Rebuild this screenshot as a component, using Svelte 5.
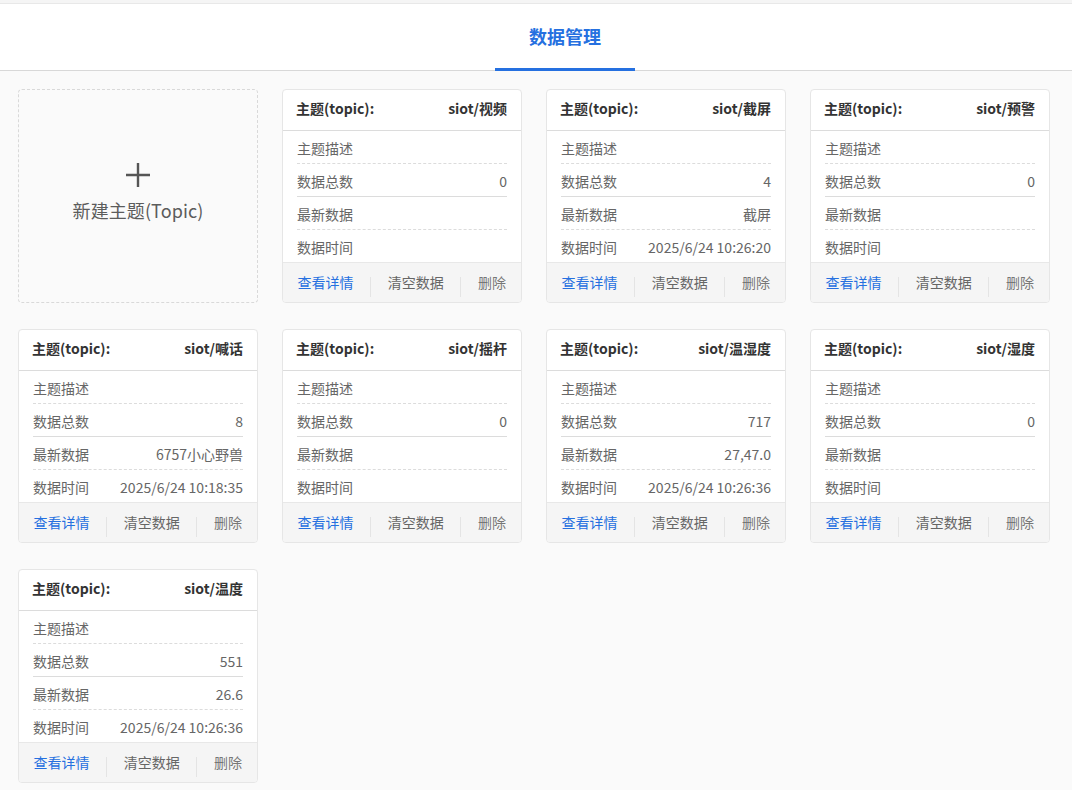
<script>
	const topics = [
		{ name: 'siot/视频', total: 0, latest: '', time: '' },
		{ name: 'siot/截屏', total: 4, latest: '截屏', time: '2025/6/24 10:26:20' },
		{ name: 'siot/预警', total: 0, latest: '', time: '' },
		{ name: 'siot/喊话', total: 8, latest: '6757小心野兽', time: '2025/6/24 10:18:35' },
		{ name: 'siot/摇杆', total: 0, latest: '', time: '' },
		{ name: 'siot/温湿度', total: 717, latest: '27,47.0', time: '2025/6/24 10:26:36' },
		{ name: 'siot/湿度', total: 0, latest: '', time: '' },
		{ name: 'siot/温度', total: 551, latest: '26.6', time: '2025/6/24 10:26:36' }
	];
</script>

<div class="page">
	<header class="tabs">
		<a class="tab">数据管理</a>
	</header>

	<main class="grid">
		<div class="card-new">
			<svg class="plus" width="26" height="26" viewBox="0 0 26 26">
				<path d="M13 1v24M1 13h24" stroke="#555" stroke-width="2.4" fill="none" />
			</svg>
			<span>新建主题(Topic)</span>
		</div>

		{#each topics as t}
			<div class="card">
				<div class="card-head">
					<span>主题(topic):</span>
					<span>{t.name}</span>
				</div>
				<div class="card-body">
					<div class="row dashed"><span>主题描述</span></div>
					<div class="row solid"><span>数据总数</span><span>{t.total}</span></div>
					<div class="row dashed"><span>最新数据</span><span>{t.latest}</span></div>
					<div class="row last"><span>数据时间</span><span>{t.time}</span></div>
				</div>
				<div class="card-foot">
					<a class="link primary">查看详情</a>
					<i></i>
					<a class="link">清空数据</a>
					<i></i>
					<a class="link muted">删除</a>
				</div>
			</div>
		{/each}
	</main>
</div>

<style>
	:global(body) {
		background: #fafafa;
	}

	.page {
		font-family: "Noto Sans CJK SC", "Noto Sans", sans-serif;
		font-size: 14px;
		color: #666;
		border-top: 3px solid #f5f5f5;
		box-sizing: border-box;
		height: 790px;
		overflow: hidden;
		background: #fafafa;
	}

	.tabs {
		display: flex;
		justify-content: center;
		height: 68px;
		box-sizing: border-box;
		padding-left: 58px;
		background: #fff;
		border-top: 1px solid #e8e8e8;
		border-bottom: 1px solid #d8d8d8;
	}

	.tab {
		width: 140px;
		height: 67px;
		box-sizing: border-box;
		text-align: center;
		line-height: 64px;
		font-size: 18px;
		font-weight: 700;
		color: #2570e0;
		border-bottom: 3px solid #2570e0;
	}

	.grid {
		display: grid;
		grid-template-columns: repeat(4, 240px);
		column-gap: 24px;
		row-gap: 26px;
		padding: 18px 0 0 18px;
	}

	.card-new {
		height: 214px;
		box-sizing: border-box;
		border: 1px dashed #d9d9d9;
		border-radius: 4px;
		display: flex;
		flex-direction: column;
		align-items: center;
		padding-top: 72px;
		font-size: 18px;
		letter-spacing: 0.1px;
		color: #5c5c5c;
	}

	.plus {
		margin-bottom: 9px;
	}

	.card {
		height: 214px;
		box-sizing: border-box;
		border: 1px solid #e6e6e6;
		border-radius: 4px;
		background: #fff;
		overflow: hidden;
		display: flex;
		flex-direction: column;
	}

	.card-head {
		height: 41px;
		flex: none;
		box-sizing: border-box;
		display: flex;
		align-items: center;
		justify-content: space-between;
		padding: 0 14px 5px 13px;
		border-bottom: 1px solid #dcdcdc;
		font-weight: 700;
		color: #333;
	}

	.card-body {
		flex: none;
		padding: 0 14px;
	}

	.row {
		height: 33px;
		box-sizing: border-box;
		display: flex;
		align-items: center;
		justify-content: space-between;
	}

	.dashed, .solid {
		padding-top: 2px;
	}

	.dashed {
		border-bottom: 1px dashed #dcdcdc;
	}

	.solid {
		border-bottom: 1px solid #dcdcdc;
	}

	.last {
		height: 32px;
		padding-top: 1px;
	}

	.card-foot {
		height: 40px;
		flex: none;
		box-sizing: border-box;
		display: flex;
		align-items: center;
		justify-content: space-between;
		padding: 0 15px 1px 14.5px;
		background: #f5f5f5;
		border-top: 1px solid #e8e8e8;
	}

	.card-foot i {
		width: 1px;
		height: 20px;
		margin-top: 9px;
		background: #e4e4e4;
	}

	.primary {
		color: #2570e0;
	}

	.muted {
		color: #777;
	}
</style>
